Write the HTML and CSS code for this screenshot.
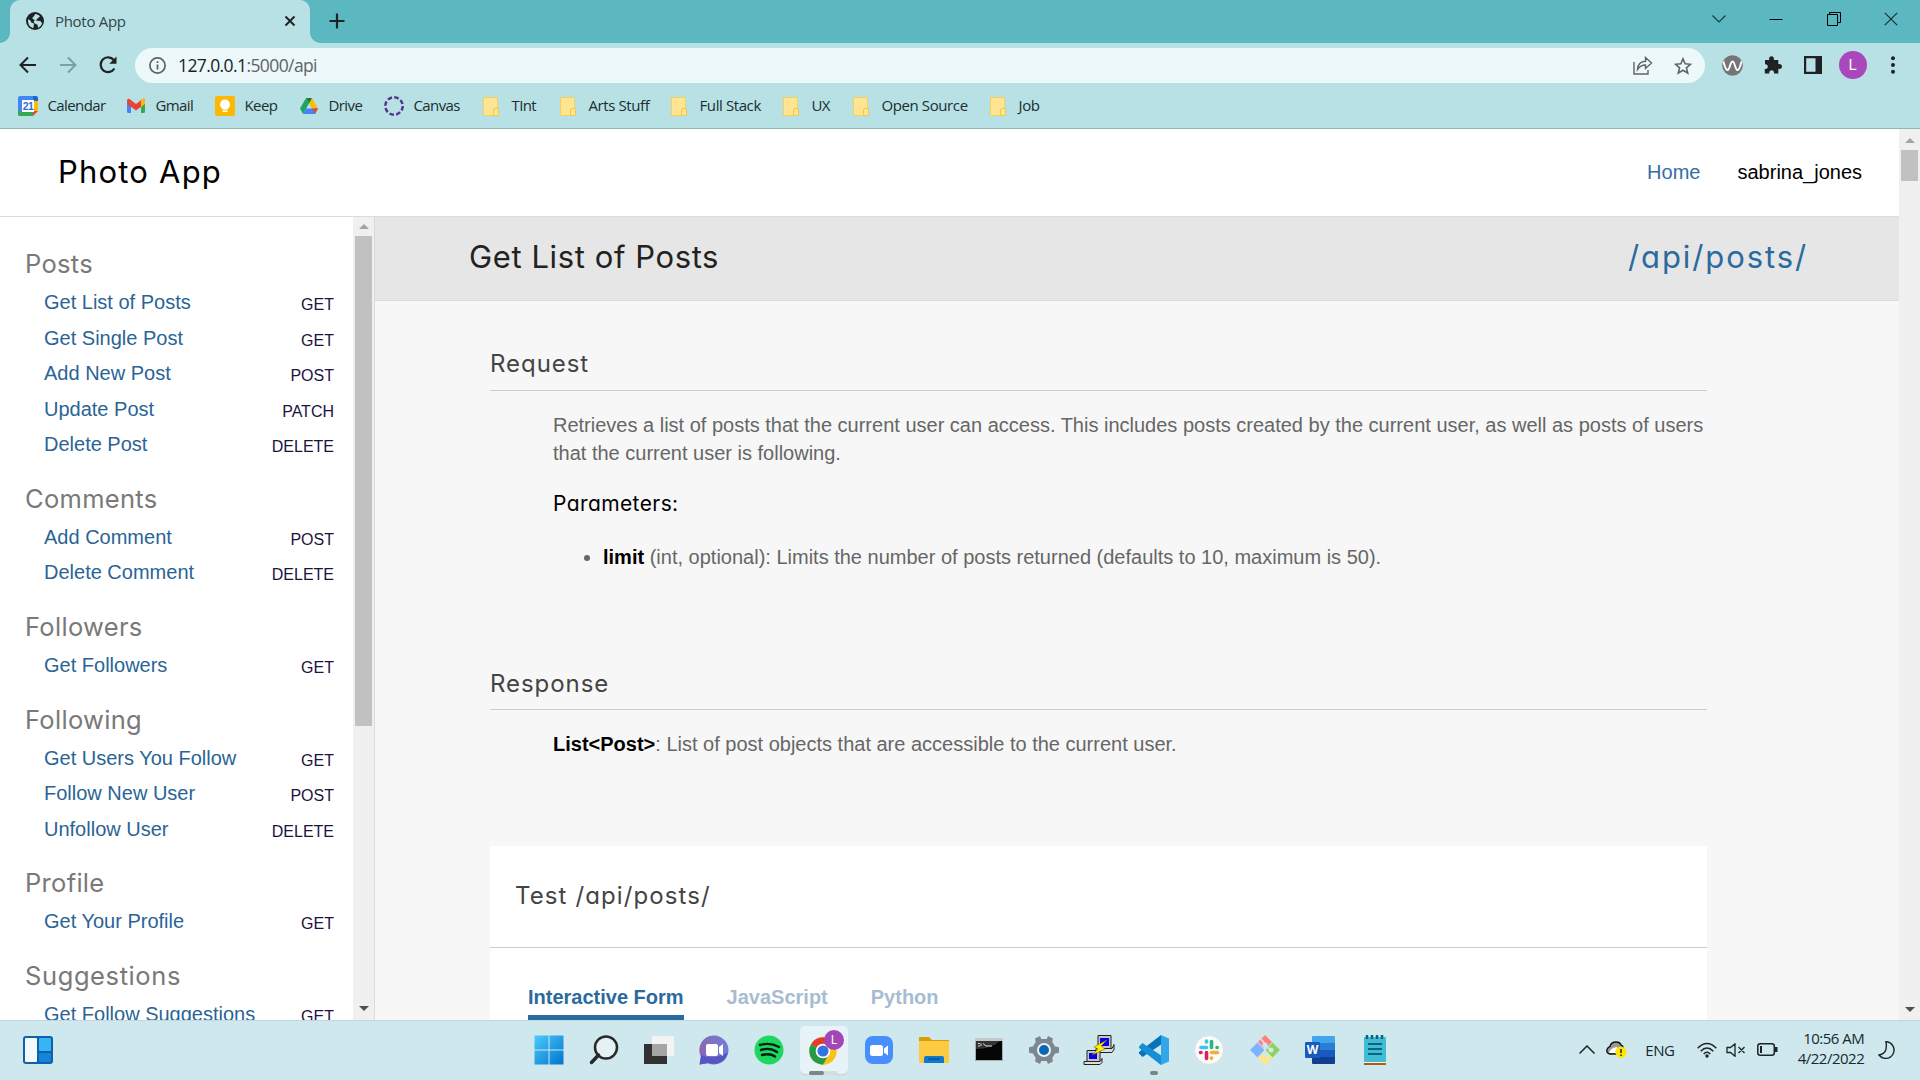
FILE: index.html
```html
<!DOCTYPE html>
<html lang="en"><head><meta charset="utf-8"><title>Photo App</title><link rel="stylesheet" href="styles.css"></head>
<body>
<header class="tabstrip">
  <div class="tab">
    <svg class="globe" width="18" height="18" viewBox="0 0 18 18"><circle cx="9" cy="9" r="9" fill="#202124"/><path d="M2 7.500c2 0 3 1.500 3.300 3 .9.3 2.200.3 2.600 1.400.2 1-.5 2-.4 4C4 15.500 1.700 12.500 2 7.500ZM9 2c2 0 4 1 5 2.500-1.500.5-1 1.500-2.500 1.700-.2 1.300-1.200 1.500-1.800 2.200l4.500.6c1 .4.8 1.800 2 2C15.500 13.500 14 15 12 15.700c-.4-1.500.2-2.600-1-3.200-1.500-.8-3-1-3.200-2.500.2-1 1-1.400.8-2.200C7.500 7.500 6 7 6.500 5.500 7.500 5 8.500 4 9 2Z" fill="#b7e1e4"/></svg>
    <span class="tab-title">Photo App</span>
    <svg class="tab-close" width="12" height="12" viewBox="0 0 12 12"><path d="m1.500 1.500 9 9m0-9-9 9" stroke="#202124" stroke-width="1.900"/></svg>
  </div>
  <svg class="newtab" width="16" height="16" viewBox="0 0 16 16"><path d="M8 .5v15M.5 8h15" stroke="#202124" stroke-width="2.200"/></svg>
  <div class="window-controls">
    <svg width="14" height="14" viewBox="0 0 14 14"><path d="m.5 3.500 6.500 6.500 6.500-6.500" fill="none" stroke="#1c3b3e" stroke-width="1.200"/></svg>
    <svg width="14" height="14" viewBox="0 0 14 14"><path d="M.5 7.500h13" stroke="#000"/></svg>
    <svg width="14" height="14" viewBox="0 0 14 14"><path d="M.5 2.500h10v11H.5zM2.500 2.500v-2h11v10h-3" fill="none" stroke="#000"/></svg>
    <svg width="14" height="14" viewBox="0 0 14 14"><path d="m.8.8 12.400 12.400m0-12.400L.8 13.200" stroke="#123034" stroke-width="1.200"/></svg>
  </div>
</header>
<nav class="toolbar">
  <div class="nav-icons">
    <svg width="18" height="18" viewBox="0 0 18 18"><path d="M17 9H2m7-7.500L1.500 9 9 16.500" fill="none" stroke="#202124" stroke-width="2"/></svg>
    <svg width="18" height="18" viewBox="0 0 18 18"><path d="M1 9h15M9 1.500 16.500 9 9 16.500" fill="none" stroke="#7c9fa2" stroke-width="2"/></svg>
    <svg width="18" height="18" viewBox="0 0 18 18"><path d="M15.400 12.500A7.400 7.400 0 1 1 14.800 4" fill="none" stroke="#202124" stroke-width="2.200"/><path d="M17.500.5v7.200h-7.200z" fill="#202124"/></svg>
  </div>
  <div class="omnibox">
    <svg width="17" height="17" viewBox="0 0 17 17"><circle cx="8.500" cy="8.500" r="7.600" fill="none" stroke="#5f6368" stroke-width="1.700"/><path d="M8.500 7.600v5M8.500 4.300v1.800" stroke="#5f6368" stroke-width="1.800"/></svg>
    <span class="url"><b>127.0.0.1</b>:5000/api</span>
    <svg class="share" width="20" height="19" viewBox="0 0 20 19"><path d="M1 6v12h14v-4M4.500 13.500c.3-5 3-8 8-8.200V1.500l6 5.500-6 5.500V9c-4 0-6 1.500-8 4.500Z" fill="none" stroke="#5f6368" stroke-width="1.400"/></svg>
    <svg width="18" height="18" viewBox="0 0 18 18"><path d="m9 1.800 2.100 5 5.400.5-4.100 3.500 1.300 5.300L9 13.200l-4.700 2.900 1.300-5.300-4.100-3.500 5.400-.5z" fill="none" stroke="#5f6368" stroke-width="1.600"/></svg>
  </div>
  <div class="extensions">
    <svg width="21" height="21" viewBox="0 0 21 21"><circle cx="10.500" cy="10.500" r="10.300" fill="#757575"/><path d="M1.500 6.500c1.200 5 2.200 8.500 4 8.500 2.500 0 2.500-8.500 5-8.500s2.500 8.500 5 8.500c1.800 0 2.800-3.500 4-8.500" fill="none" stroke="#fff" stroke-width="1.900"/></svg>
    <svg width="18" height="18" viewBox="0 0 18 18"><path d="M1 4h4.200C4.700 1.700 5.800.2 7.500.2S10.300 1.700 9.800 4h4.500v4.200c2.200-.4 3.700.6 3.700 2.300s-1.500 2.800-3.700 2.300v4.700H10c.3-2-.7-3.200-2.300-3.200S5 15.500 5.300 17.500H.8v-4.600c2 .3 3-.7 3-2.200S2.800 8.100 1 8.400z" fill="#202124"/></svg>
    <svg width="18" height="18" viewBox="0 0 18 18"><path fill-rule="evenodd" d="M0 0h18v18H0zM2.200 2.200v13.600h9.300V2.200z" fill="#202124"/></svg>
    <span class="avatar">L</span>
    <svg width="4" height="18" viewBox="0 0 4 18"><g fill="#202124"><circle cx="2" cy="2.200" r="2"/><circle cx="2" cy="9" r="2"/><circle cx="2" cy="15.800" r="2"/></g></svg>
  </div>
</nav>
<nav class="bookmarks">
  <a class="bm w108"><svg width="20" height="20" viewBox="0 0 20 20"><path d="M0 2q0-2 2-2h13v5H5v15H2q-2 0-2-2z" fill="#4285f4"/><path d="M15 0h3q2 0 2 2v3h-5z" fill="#1967d2"/><path d="M15 5h5v10h-5z" fill="#fbbc04"/><path d="M0 15h15v5H2q-2 0-2-2z" fill="#34a853"/><path d="M15 15h5l-5 5z" fill="#ea4335"/><path d="M4 4h12v12H4z" fill="#fff"/><text x="10" y="13.800" text-anchor="middle" class="cal-day">21</text></svg><span>Calendar</span></a>
  <a class="bm w89"><svg width="20" height="20" viewBox="0 0 20 20"><path d="M1 4.500 5 7v10H2.500Q1 17 1 15.500z" fill="#4285f4"/><path d="m15 7 4-2.500v11q0 1.500-1.500 1.500H15z" fill="#34a853"/><path d="M1 8V5q0-3 2.500-2l6.500 5 6.500-5Q19 2 19 5v3l-9 6.500z" fill="#ea4335"/><path d="m15 4.200 1.500-1.200Q19 2 19 5v3l-4 3z" fill="#fbbc04"/></svg><span>Gmail</span></a>
  <a class="bm w84"><svg width="20" height="20" viewBox="0 0 20 20"><rect width="20" height="20" rx="2" fill="#fbb905"/><circle cx="10" cy="8.500" r="5" fill="#fff"/><path d="M7.500 11h5v2.500h-5zM7.500 14.500h5V16h-5z" fill="#fff"/></svg><span>Keep</span></a>
  <a class="bm w85"><svg width="20" height="20" viewBox="0 0 20 20"><path d="M7 2 1 12.500 4 18l6-10.500z" fill="#1fa463"/><path d="M7 2h6l6 10.500h-6z" fill="#fbbc04"/><path d="M7 2h6l-3 5.500z" fill="#188038"/><path d="m7 12.500h12L16 18H4z" fill="#4285f4"/><path d="M13 12.500h6L16 18z" fill="#ea4335"/></svg><span>Drive</span></a>
  <a class="bm w97"><svg width="20" height="20" viewBox="0 0 20 20"><circle cx="10" cy="10" r="8.700" fill="none" stroke="#55358c" stroke-width="2.500" stroke-dasharray="4.550 2.280"/></svg><span>Canvas</span></a>
  <a class="bm w77"><i class="folder"></i><span>TInt</span></a>
  <a class="bm w111"><i class="folder"></i><span class="loose">Arts Stuff</span></a>
  <a class="bm w112"><i class="folder"></i><span class="loose">Full Stack</span></a>
  <a class="bm w70"><i class="folder"></i><span>UX</span></a>
  <a class="bm w137"><i class="folder"></i><span class="loose">Open Source</span></a>
  <a class="bm w70"><i class="folder"></i><span class="loose">Job</span></a>
</nav>
<div class="viewport">
  <div class="page">
    <header class="site-header"><h1 class="logo">Photo App</h1><a class="home">Home</a><span>sabrina_jones</span></header>
    <div class="columns">
      <aside class="sidebar">
        <div class="menu">
          <section><h2>Posts</h2><p><a>Get List of Posts</a><em>GET</em></p><p><a>Get Single Post</a><em>GET</em></p><p><a>Add New Post</a><em>POST</em></p><p><a>Update Post</a><em>PATCH</em></p><p><a>Delete Post</a><em>DELETE</em></p></section>
          <section><h2>Comments</h2><p><a>Add Comment</a><em>POST</em></p><p><a>Delete Comment</a><em>DELETE</em></p></section>
          <section><h2>Followers</h2><p><a>Get Followers</a><em>GET</em></p></section>
          <section><h2>Following</h2><p><a>Get Users You Follow</a><em>GET</em></p><p><a>Follow New User</a><em>POST</em></p><p><a>Unfollow User</a><em>DELETE</em></p></section>
          <section><h2>Profile</h2><p><a>Get Your Profile</a><em>GET</em></p></section>
          <section><h2 class="wide">Suggestions</h2><p><a>Get Follow Suggestions</a><em>GET</em></p></section>
        </div>
        <div class="scrollbar side-scroll"><i class="up"></i><i class="thumb"></i><i class="down"></i></div>
      </aside>
      <main class="main">
        <div class="title-bar"><h2>Get List of Posts</h2><span class="endpoint">/api/posts/</span></div>
        <div class="content">
          <h3>Request</h3>
          <div class="body request">
            <p>Retrieves a list of posts that the current user can access. This includes posts created by the current user, as well as posts of users that the current user is following.</p>
            <h4>Parameters:</h4>
            <ul><li><strong>limit</strong> (int, optional): Limits the number of posts returned (defaults to 10, maximum is 50).</li></ul>
          </div>
          <h3 class="response-title">Response</h3>
          <div class="body response"><p><strong>List&lt;Post&gt;</strong>: List of post objects that are accessible to the current user.</p></div>
          <div class="test-card"><h3>Test /api/posts/</h3><div class="tabs"><a class="active">Interactive Form</a><a>JavaScript</a><a>Python</a></div></div>
        </div>
      </main>
    </div>
  </div>
  <div class="scrollbar page-scroll"><i class="up"></i><i class="thumb"></i><i class="down"></i></div>
</div>
<footer class="taskbar">
  <div class="widgets"><svg width="32" height="28" viewBox="0 0 32 28"><rect x="1" width="30" height="28" rx="3" fill="#0e63a8"/><rect x="3" y="2" width="12" height="24" rx="1" fill="#f4f9fd"/><rect x="17" y="2" width="12" height="13" rx="1" fill="#37b5f2"/><rect x="17" y="17" width="12" height="9" rx="1" fill="#1583d8"/></svg></div>
  <div class="apps">
    <span><svg width="30" height="30" viewBox="0 0 30 30"><defs><linearGradient id="win" x2="1" y2="1"><stop stop-color="#4ccbfb"/><stop offset="1" stop-color="#0074cf"/></linearGradient></defs><path d="M.5.500h14v14H.5zM15.500.5h14v14h-14zM.5 15.500h14v14H.5zM15.500 15.500h14v14h-14z" fill="url(#win)"/></svg></span>
    <span><svg width="30" height="30" viewBox="0 0 30 30"><circle cx="17" cy="12.500" r="11" fill="#e4f2f5" stroke="#292929" stroke-width="2.500"/><path d="m9.500 20-7 7.500" stroke="#292929" stroke-width="3.500" stroke-linecap="round"/></svg></span>
    <span><svg width="30" height="30" viewBox="0 0 30 30"><path d="M0 9h23v20H0z" fill="#303130"/><path d="M8 1h22v20H8z" fill="#f3f3f3"/><path d="M8 9h15v12H8z" fill="#a4a6a6"/></svg></span>
    <span><svg width="30" height="30" viewBox="0 0 30 30"><defs><linearGradient id="chat" x2="1"><stop stop-color="#8a67b3"/><stop offset="1" stop-color="#717ed9"/></linearGradient></defs><path d="M15 .5a14.500 14.500 0 1 1-6 27.700L.5 29.500l2-7A14.500 14.500 0 0 1 15 .5Z" fill="url(#chat)"/><path d="M2 20q13 6 27-3c-2 9-10 14-20 11L.5 29.500z" fill="#5755c4"/><rect x="7" y="9" width="12" height="12" rx="2" fill="#fff"/><path d="m20 12 4-3v12l-4-3z" fill="#fff"/></svg></span>
    <span><svg width="30" height="30" viewBox="0 0 30 30"><circle cx="15" cy="15" r="14.500" fill="#1ed760"/><path d="M6 10q10-3 19 2M7 15q9-3 16 2M8 20q8-2 13 1.500" fill="none" stroke="#071d0e" stroke-width="2.400" stroke-linecap="round"/></svg></span>
    <span class="current"><svg width="36" height="48" viewBox="0 0 36 48"><circle cx="14" cy="24" r="13.700" fill="#fbc116"/><path d="M14 24 2.100 17.200a13.700 13.700 0 0 1 23.800 0z" fill="#e33b2e"/><path d="m14 24-11.900-6.800A13.700 13.700 0 0 0 14 37.700L20 27z" fill="#259b48"/><circle cx="14" cy="24" r="7.300" fill="#fff"/><circle cx="14" cy="24" r="5.600" fill="#3173e0"/><circle cx="25" cy="13" r="10" fill="#a446b5"/><text x="25" y="17" text-anchor="middle" class="badge-letter">L</text><rect y="44" width="29" height="4" rx="2" fill="#d5dddf"/><rect y="44" width="15" height="4" rx="2" fill="#7b8486"/></svg></span>
    <span><svg width="30" height="30" viewBox="0 0 30 30"><rect x="1" y="1" width="28" height="28" rx="8" fill="#498eff"/><rect x="6" y="10" width="13" height="11" rx="2.500" fill="#fff"/><path d="m20 13.500 4-3v10l-4-3z" fill="#fff"/></svg></span>
    <span><svg width="30" height="30" viewBox="0 0 30 30"><path d="M0 3q0-1 1-1h9l3 3h17v6H0z" fill="#dd9a05"/><path d="M0 6h30v21q0 1-1 1H1q-1 0-1-1z" fill="#fdcb43"/><path d="M5 28v-5q0-2 2-2h16q2 0 2 2v5z" fill="#1079cb"/><path d="M9 24h12" stroke="#0a4c88" stroke-width="1.300"/></svg></span>
    <span><svg width="30" height="30" viewBox="0 0 30 30"><rect x="1.500" y="3.500" width="27" height="22" fill="#060606" stroke="#a8adad"/><path d="M1 3h28v3H1z" fill="#c3c8c8"/><path d="M2 14q15 0 24-8H2z" fill="#333"/><path d="M4 8.500h2M4 11h2M7 8.500v2.500M9 8.500l3 2.500h6" stroke="#ddd" fill="none"/></svg></span>
    <span><svg width="30" height="30" viewBox="0 0 30 30"><path d="m11 1 1.300 3h5.400L19 1l5 2.500-.7 3.500 2.700 4.500 4 .8v5.500l-4 .8-2.700 4.400.7 3.500-5 2.500-1.300-3h-5.400l-1.300 3-5-2.500.7-3.500L4 18.600l-4-.8v-5.500l4-.8L6.700 7 6 3.500z" fill="#7e8790"/><circle cx="15" cy="15" r="7" fill="#e9f3f8"/><circle cx="15" cy="15" r="5" fill="#0868b8"/></svg></span>
    <span><svg width="32" height="32" viewBox="0 0 32 32"><g stroke="#222"><path d="M15 1.500h13v13H15z" fill="#cbc7bd"/><path d="m13 14.500h16l2-4v5l-2 3H13z" fill="#ddd"/><path d="M4 16.500h13v11H4z" fill="#cbc7bd"/><path d="m1 27.500h16l2-3v4l-2 2H1z" fill="#ddd"/></g><path d="M17 4h9v8h-9zM6 19h8v6H6z" fill="#0800f0"/><path d="m24 6-13 7 4 2-6 6 13-6-4-3z" fill="#fff200" stroke="#7d7600" stroke-width=".6"/></svg></span>
    <span class="running"><svg width="30" height="30" viewBox="0 0 30 30"><path d="m22 0 1 9L3.500 22 0 18.500V17z" fill="#0873bb"/><path d="m22 30 1-9L3.500 8 0 11.500V13z" fill="#168fd4"/><path d="m22 0 8 3.500v23L22 30z" fill="#31a6e8"/></svg></span>
    <span><svg width="30" height="30" viewBox="0 0 30 30"><circle cx="15" cy="15" r="14.500" fill="#fafafa" stroke="#d8dfe2"/><g fill="none" stroke-width="3.600" stroke-linecap="round"><path d="M12.500 6v1M7 12.500h5.500" stroke="#36c5f0"/><path d="M17.500 6.500v6M23 12.500h.2" stroke="#2eb67d"/><path d="M17.500 17.500h6M17.500 23v.2" stroke="#ecb22e"/><path d="M12.500 17.500v6M6.500 17.500h.5" stroke="#e01e5a"/></g></svg></span>
    <span><svg width="30" height="30" viewBox="0 0 30 30"><path d="M15 0 8 7l7 7 7-7z" fill="#ff807d"/><path d="m7.500 7.500-7.500 7.500 7.500 7.500L14.500 15z" fill="#80b3ff"/><path d="m22.500 7.500 7.500 7.500-7.500 7.500-7-7.500z" fill="#8dd35f"/><path d="m15 15.500 7 7.500-7 7-7-7z" fill="#ffe680"/><path d="m11 4 4 5v12M15 10l6 5" fill="none" stroke="#cee8ee" stroke-width="1.800"/><g fill="#cee8ee"><circle cx="15" cy="10" r="2.500"/><circle cx="15" cy="20" r="2.500"/><circle cx="21" cy="15" r="2.500"/></g></svg></span>
    <span><svg width="30" height="30" viewBox="0 0 30 30"><path d="M7 2q0-1 1-1h21q1 0 1 1v6H7z" fill="#41a5ee"/><path d="M7 8h23v7H7z" fill="#2b7cd3"/><path d="M7 15h23v7H7z" fill="#185abd"/><path d="M7 22h23v6q0 1-1 1H8q-1 0-1-1z" fill="#103f91"/><rect y="7" width="15" height="16" rx="1" fill="#185abd"/><text x="7.500" y="19" text-anchor="middle" class="word-letter">W</text></svg></span>
    <span><svg width="30" height="32" viewBox="0 0 30 32"><path d="M4 27h22v4H4z" fill="#b35a15"/><path d="M4 27h22v2H4z" fill="#f4efe9"/><rect x="4" y="3" width="22" height="25" rx="1" fill="#41bcd5"/><path d="M8 10h14M8 15h14M8 20h14" stroke="#0b657d" stroke-width="2"/><path d="M7 1v4m5-4v4m5-4v4m5-4v4" stroke="#0b657d" stroke-width="2.500"/></svg></span>
  </div>
  <div class="tray">
    <svg class="caret" width="16" height="9" viewBox="0 0 16 9"><path d="m.5 8.500 7.500-7.500 7.500 7.500" fill="none" stroke="#222" stroke-width="1.500"/></svg>
    <svg class="cloud" width="21" height="17" viewBox="0 0 21 17"><path d="M4 13Q0 12 1 8.500 2 6 4 5.500 5 1 10 1q4 0 5 3 3 1 2 5l-2 4z" fill="#999" stroke="#111" stroke-width="1.400"/><path d="M3 12q1-5 8-6l2 6z" fill="#fff"/><circle cx="15" cy="11.300" r="5.700" fill="#ffe600"/><path d="M15 8v4m0 1.500v1.500" stroke="#222" stroke-width="1.500"/></svg>
    <span class="lang">ENG</span>
    <svg class="wifi" width="20" height="16" viewBox="0 0 20 16"><g fill="none" stroke="#1b2427" stroke-width="1.500"><path d="M.7 6.200q9.300-9.400 18.600 0M3.700 9.200q6.300-6.400 12.600 0M6.700 12q3.300-3.400 6.600 0"/></g><circle cx="10" cy="14" r="1.700" fill="#1b2427"/></svg>
    <svg class="volume" width="20" height="14" viewBox="0 0 20 14"><path d="M1 4.500h3.500L9 .8v12.400L4.500 9.500H1zM12.500 4l6 6m0-6-6 6" fill="none" stroke="#1b2427" stroke-width="1.300"/></svg>
    <svg class="battery" width="21" height="13" viewBox="0 0 21 13"><rect x=".8" y=".8" width="16.500" height="11.400" rx="2.500" fill="none" stroke="#1b2427" stroke-width="1.500"/><path d="M3 3h2v7H3zM18 4h2.500v5H18z" fill="#1b2427"/></svg>
    <div class="clock">10:56 AM<br>4/22/2022</div>
    <svg class="moon" width="17" height="18" viewBox="0 0 17 18"><path d="M8 .8a8.300 8.300 0 1 1-7 13.200Q10 13 8 .8Z" fill="none" stroke="#1b2427" stroke-width="1.400"/></svg>
  </div>
</footer>
</body></html>
```
FILE: styles.css
```css
* { box-sizing: border-box; }
body { margin: 0; width: 1920px; height: 1080px; overflow: hidden; display: flex; flex-direction: column; font-family: "Liberation Sans", Arial, sans-serif; background: #fff; }
h1, h2, h3, h4, p, ul { margin: 0; padding: 0; font-weight: 400; }
svg { display: block; flex: none; }

.tabstrip { flex: none; height: 43px; background: #5bb8c1; display: flex; align-items: center; padding-left: 10px; }
.tab { position: relative; width: 300px; height: 43px; background: #b7e1e4; border-radius: 10px 10px 0 0; display: flex; align-items: center; padding: 0 14px 2px 16px; }
.tab::before, .tab::after { content: ""; position: absolute; bottom: 0; width: 10px; height: 10px; }
.tab::before { left: -10px; background: radial-gradient(circle at 0 0, #5bb8c1 9.500px, #b7e1e4 10px); }
.tab::after { right: -10px; background: radial-gradient(circle at 100% 0, #5bb8c1 9.500px, #b7e1e4 10px); }
.tab-title { margin-left: 11px; flex: 1; font: 15px "Open Sans", sans-serif; letter-spacing: -.3px; color: #2f4548; }
.newtab { margin: 0 0 1px 19px; }
.window-controls { margin-left: auto; display: flex; gap: 43.300px; padding-right: 22px; margin-top: -6px; }

.toolbar { flex: none; height: 45px; background: #b7e1e4; display: flex; align-items: center; }
.nav-icons { width: 135px; padding: 0 0 2px 18.500px; display: flex; gap: 22px; }
.omnibox { width: 1570px; height: 35px; border-radius: 18px; background: #ecf8f9; display: flex; align-items: center; padding: 0 13px 0 14px; }
.url { margin-left: 12px; flex: 1; font: 17.500px/32px "Open Sans", sans-serif; height: 34px; letter-spacing: -.600px; color: #5f6368; }
.url b { font-weight: 400; color: #202124; }
.share { margin-right: 21px; }
.extensions { flex: 1; display: flex; align-items: center; padding: 0 0 1px 17px; }
.extensions svg:nth-child(2) { margin-left: 20.500px; }
.extensions svg:nth-child(3) { margin-left: 22px; }
.avatar { width: 28px; height: 28px; margin: 0 24px 0 17px; border-radius: 50%; background: #ab47bc; color: #fff; text-align: center; font: 15px/28px Roboto, sans-serif; }

.bookmarks { flex: none; height: 41px; background: #b7e1e4; border-bottom: 1px solid #8fb5b8; display: flex; align-items: center; padding: 0 0 4px 18px; font: 15px/22px "Open Sans", sans-serif; letter-spacing: -.6px; color: #202d30; }
.bm { flex: none; display: flex; align-items: center; gap: 9.500px; white-space: nowrap; }
.bm span { margin-top: -2px; }
.bm .loose { letter-spacing: -.4px; }
.w108 { width: 108px; } .w89 { width: 89px; } .w84 { width: 84px; } .w85 { width: 85px; } .w97 { width: 97px; } .w77 { width: 77px; } .w111 { width: 111px; } .w112 { width: 112px; } .w70 { width: 70px; } .w137 { width: 137px; }
.folder { flex: none; position: relative; width: 15px; height: 19px; margin: 0 4px 0 2px; background: #ffe592; border: 1px solid #f3d060; border-radius: 1px; }
.folder::after { content: ""; position: absolute; right: -2px; bottom: -1px; width: 4px; height: 6px; border: 1px solid #edc94c; background: #ffe592; border-radius: 2px 1px 0 0; }
.cal-day { font: bold 10.500px "Liberation Sans", sans-serif; fill: #2b6fe0; }

.viewport { height: 891px; flex: none; display: flex; }
.page { width: 1899px; display: flex; flex-direction: column; }
.site-header { flex: none; height: 88px; border-bottom: 1px solid #dcdcdc; display: flex; align-items: center; padding: 0 37px 0 58px; font-size: 20px; }
.logo { flex: 1; padding-bottom: 3px; font: 31px Inter, sans-serif; font-feature-settings: "cv11"; letter-spacing: 1.200px; }
.home { color: #336ea5; margin-right: 37px; }
.columns { flex: 1; min-height: 0; display: flex; }
.sidebar { width: 375px; border-right: 1px solid #dadada; display: flex; }
.menu { width: 353px; height: 803px; overflow: hidden; padding: 28px 19px 0 25px; }
.menu section { margin-bottom: 17.200px; }
.menu h2 { height: 40px; font: 25.500px/37px Inter, sans-serif; font-feature-settings: "cv11"; letter-spacing: .3px; color: #797979; white-space: nowrap; }
.menu .wide { letter-spacing: .6px; }
.menu p { height: 35.500px; line-height: 35.500px; padding-left: 19px; display: flex; justify-content: space-between; font-size: 20px; color: #2a6496; }
.menu em { font-style: normal; font-size: 16px; line-height: 40px; color: #1b1340; }

.scrollbar { flex: none; width: 21px; background: #f0f0f0; display: flex; flex-direction: column; align-items: center; }
.up, .down { border: 5px solid transparent; }
.up { border-top: 0; border-bottom-color: #a3a3a3; }
.down { border-bottom: 0; border-top-color: #505050; margin-top: auto; }
.thumb { width: 17px; background: #c1c1c1; }
.side-scroll .up { margin: 7px 0; }
.side-scroll .thumb { height: 490px; }
.side-scroll .down { margin-bottom: 9px; }
.page-scroll .up { margin: 9px 0 7px; }
.page-scroll .thumb { height: 31px; }
.page-scroll .down { margin-bottom: 8px; }

.main { flex: 1; background: #f7f7f7; overflow: hidden; height: 803px; }
.title-bar { height: 84px; background: #e6e6e6; border-bottom: 1px solid #dadada; display: flex; justify-content: space-between; align-items: center; padding: 0 91px 5px 94px; font: 31px Inter, sans-serif; font-feature-settings: "cv11"; color: #222; }
.title-bar h2 { font: inherit; letter-spacing: .6px; }
.endpoint { color: #2a6a9e; letter-spacing: 1.900px; }
.content { width: 1217px; margin-left: 115px; padding-top: 44px; }
.content h3 { height: 46px; border-bottom: 1px solid #ccc; font: 24px/37px Inter, sans-serif; font-feature-settings: "cv11"; letter-spacing: .95px; color: #444; }
.content .response-title { line-height: 39px; }
.body { padding-left: 63px; font-size: 20px; line-height: 28px; color: #666; }
.body p { padding-top: 20px; }
.body strong { color: #000; }
.request { height: 273px; }
.request h4 { font: 21px/28px Inter, sans-serif; font-feature-settings: "cv11"; letter-spacing: .4px; color: #000; margin-top: 23px; }
.request ul { margin-top: 25px; padding-left: 50px; }
.response { height: 136px; }
.response p { padding-top: 20px; }
.test-card { background: #fff; height: 200px; }
.content .test-card h3 { height: 102px; padding: 30px 0 0 25px; line-height: 40px; letter-spacing: 1.100px; }
.tabs { display: flex; gap: 43px; padding: 32px 0 0 38px; font-size: 20px; font-weight: 700; color: #a8bcd0; }
.tabs a { height: 40px; line-height: 34px; }
.tabs .active { color: #2a6a9e; border-bottom: 5px solid #2a6a9e; }

.taskbar { flex: none; height: 60px; background: #cee8ee; border-top: 1px solid #bdd8df; display: flex; align-items: center; }
.widgets { width: 521px; padding: 0 0 2px 22px; }
.apps { display: flex; height: 59px; padding-bottom: 1px; }
.apps span { position: relative; width: 55.080px; display: flex; align-items: center; justify-content: center; }
.current::before { content: ""; position: absolute; inset: 5px 3.500px 5px 4px; border-radius: 5px; background: #e7f3f8; box-shadow: 0 1px 1px #bdd2d8; }
.current svg { position: relative; top: 1px; left: 3.500px; }
.running::after { content: ""; position: absolute; bottom: 4px; width: 8px; height: 4px; border-radius: 2px; background: #7b8486; }
.badge-letter { font: 12px "Noto Sans", sans-serif; fill: #fff; }
.word-letter { font: bold 12px "Open Sans", sans-serif; fill: #fff; }
.tray { flex: 1; display: flex; align-items: center; padding: 0 0 2px 177px; font: 15px/20px "Open Sans", sans-serif; color: #16292e; }
.cloud { margin-left: 11px; }
.lang { margin-left: 18px; width: 30px; letter-spacing: -.4px; }
.wifi { margin-left: 22px; }
.volume { margin-left: 9px; }
.battery { margin-left: 11px; }
.clock { width: 84px; margin: -3px 14px 0 2px; text-align: right; letter-spacing: -.5px; white-space: nowrap; }
```
